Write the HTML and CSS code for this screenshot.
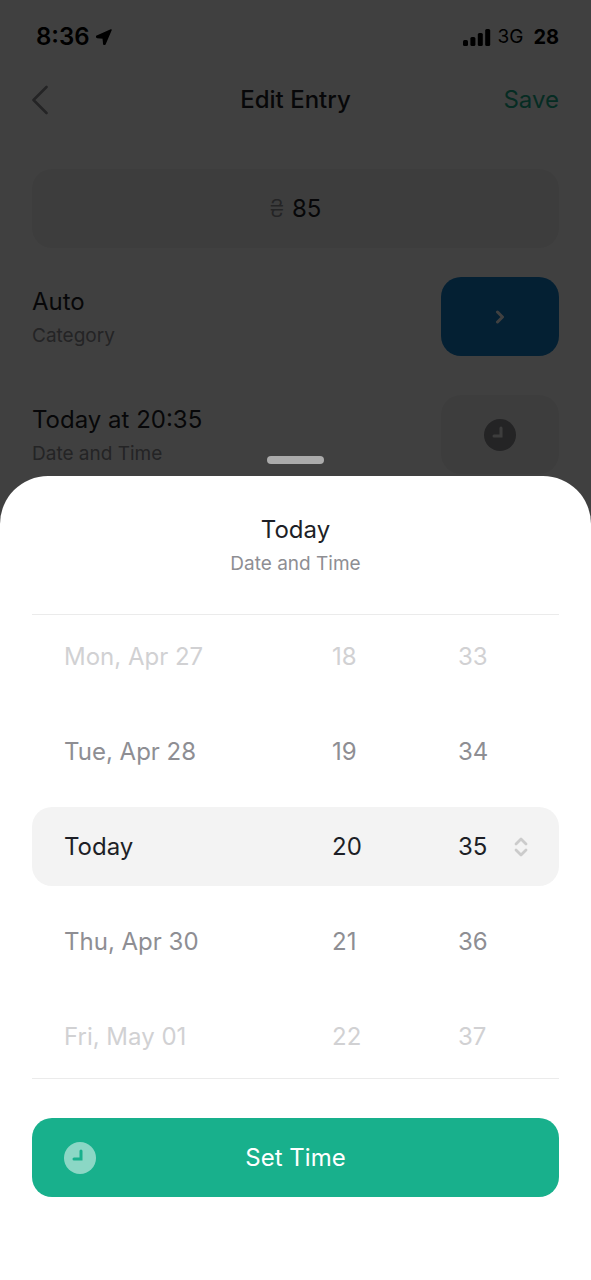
FILE: index.html
```html
<!DOCTYPE html>
<html lang="en">
<head>
<meta charset="utf-8">
<meta name="viewport" content="width=device-width, initial-scale=1">
<title>Edit Entry</title>
<link rel="stylesheet" href="styles.css">
</head>
<body>
<div class="app">
  <main class="screen">
    <div class="status">
      <div class="status-left">
        <span class="clock">8:36</span>
        <svg width="16" height="16" viewBox="0 0 16 16" aria-hidden="true"><path d="M15 1 1 7.200q-.9.7.2 1.200l6 .5.6 6q.5 1 1.200.1z" fill="currentColor" stroke="currentColor" stroke-width="1.500" stroke-linejoin="round"/></svg>
      </div>
      <div class="status-right">
        <svg width="28" height="17" viewBox="0 0 28 17" aria-hidden="true"><g fill="currentColor"><rect y="11" width="5" height="6" rx="1.5"/><rect x="7.4" y="8" width="5" height="9" rx="1.5"/><rect x="14.8" y="4" width="5" height="13" rx="1.5"/><rect x="22.2" width="5" height="17" rx="1.5"/></g></svg>
        <span class="network">3G</span>
        <span class="battery">28</span>
      </div>
    </div>
    <header class="nav">
      <button class="back" type="button" aria-label="Back">
        <svg width="16" height="30" viewBox="0 0 16 30" aria-hidden="true"><path d="M14.500 2 1.500 15l13 13" fill="none" stroke="currentColor" stroke-width="2.600" stroke-linecap="round" stroke-linejoin="round"/></svg>
      </button>
      <h1 class="title">Edit Entry</h1>
      <button class="save" type="button">Save</button>
    </header>
    <div class="amount"><span class="currency">₴</span><span>85</span></div>
    <div class="row">
      <div class="row-text">
        <div class="label">Auto</div>
        <div class="hint">Category</div>
      </div>
      <button class="tile tile-blue" type="button" aria-label="Choose category">
        <svg width="10" height="14" viewBox="0 0 10 14" aria-hidden="true"><path d="m2.500 2 5 5-5 5" fill="none" stroke="currentColor" stroke-width="3" stroke-linecap="round" stroke-linejoin="round"/></svg>
      </button>
    </div>
    <div class="row">
      <div class="row-text">
        <div class="label">Today at 20:35</div>
        <div class="hint">Date and Time</div>
      </div>
      <button class="tile" type="button" aria-label="Choose date and time">
        <svg width="32" height="32" viewBox="0 0 32 32" aria-hidden="true"><circle cx="16" cy="16" r="16" fill="currentColor"/><path class="hands" d="M17 9v8h-7" fill="none" stroke-width="3" stroke-linecap="round"/></svg>
      </button>
    </div>
  </main>
  <div class="scrim"></div>
  <section class="sheet" aria-label="Date and Time">
    <div class="grabber"></div>
    <div class="panel">
      <div class="heading">
        <h2 class="label">Today</h2>
        <div class="hint">Date and Time</div>
      </div>
      <div class="picker">
        <div class="option far"><span>Mon, Apr 27</span><span>18</span><span>33</span></div>
        <div class="option near"><span>Tue, Apr 28</span><span>19</span><span>34</span></div>
        <div class="option selected"><span>Today</span><span>20</span><span>35</span>
          <svg width="14" height="20" viewBox="0 0 14 20" aria-hidden="true"><path d="m2 7 5-5 5 5M2 13l5 5 5-5" fill="none" stroke="currentColor" stroke-width="2.800" stroke-linecap="round" stroke-linejoin="round"/></svg>
        </div>
        <div class="option near"><span>Thu, Apr 30</span><span>21</span><span>36</span></div>
        <div class="option far"><span>Fri, May 01</span><span>22</span><span>37</span></div>
      </div>
      <button class="submit" type="button">
        <svg width="32" height="32" viewBox="0 0 32 32" aria-hidden="true"><circle cx="16" cy="16" r="16" fill="#8bd7c5"/><path d="M17 9v8h-7" fill="none" stroke="#18b08c" stroke-width="3" stroke-linecap="round"/></svg>
        <span>Set Time</span>
      </button>
    </div>
  </section>
</div>
</body>
</html>
```
FILE: styles.css
```css
* {
  box-sizing: border-box;
}

body {
  margin: 0;
  background: #fff;
  color: #1d1f26;
  font: 400 24px/32px Inter, "Noto Sans", sans-serif;
}

button {
  padding: 0;
  border: 0;
  background: none;
  color: inherit;
  font: inherit;
}

svg {
  display: block;
}

.app {
  display: grid;
  min-height: 100vh;
}

.screen,
.scrim,
.sheet {
  grid-area: 1 / 1;
}

.scrim {
  z-index: 1;
  background: rgba(0, 0, 0, 0.75);
}

.screen {
  padding: 21px 32px;
}

.status {
  display: flex;
  justify-content: space-between;
  align-items: center;
  padding-left: 4px;
  color: #000;
}

.status-left,
.status-right {
  display: flex;
  align-items: center;
  gap: 6px;
}

.clock {
  font-weight: 600;
}

.network {
  font-size: 19px;
}

.battery {
  padding-left: 4px;
  font-size: 20px;
  font-weight: 700;
}

.nav {
  display: grid;
  grid-template-columns: 1fr auto 1fr;
  align-items: center;
  margin-top: 31px;
}

.back {
  justify-self: start;
  color: #8e8e93;
}

.title,
.label {
  margin: 0;
  font-size: 24px;
  font-weight: 400;
}

.title {
  font-weight: 450;
}

.save {
  justify-self: end;
  color: #18b08c;
}

.amount {
  display: flex;
  justify-content: center;
  align-items: center;
  gap: 8px;
  height: 79px;
  margin-top: 53px;
  border-radius: 20px;
  background: #f3f3f3;
}

.currency {
  color: #8e8e93;
  font-weight: 300;
}

.row {
  display: flex;
  justify-content: space-between;
  align-items: center;
  margin-top: 29px;
}

.row + .row {
  margin-top: 39px;
}

.row-text {
  padding-top: 4px;
}

.hint {
  margin-top: 2px;
  color: #8e8e93;
  font-size: 19px;
}

.tile {
  display: grid;
  place-items: center;
  width: 118px;
  height: 79px;
  border-radius: 20px;
  background: #f3f3f3;
  color: #8e8e93;
}

.tile-blue {
  background: #1080cc;
  color: #fff;
}

.hands {
  stroke: #f3f3f3;
}

.sheet {
  z-index: 2;
  align-self: end;
}

.grabber {
  width: 57px;
  height: 8px;
  margin: 0 auto 12px;
  border-radius: 4px;
  background: #ababab;
}

.panel {
  padding: 38px 32px 83px;
  border-radius: 48px 48px 0 0;
  background: #fff;
}

.heading {
  padding-bottom: 34px;
  border-bottom: 1px solid #ebebeb;
  text-align: center;
}

.picker {
  display: grid;
  gap: 16px;
  padding: 2px 0;
  border-bottom: 1px solid #ebebeb;
}

.option {
  display: grid;
  grid-template-columns: 268fr 126fr 56fr auto;
  align-items: center;
  height: 79px;
  padding: 0 31px 0 32px;
  border-radius: 20px;
}

.option:not(.selected) {
  padding-right: 45px;
}

.near {
  color: #8e8e93;
}

.far {
  color: #d1d1d3;
}

.selected {
  background: #f3f3f3;
}

.selected svg {
  color: #cbcbcb;
}

.submit {
  display: grid;
  grid-template-columns: 1fr auto 1fr;
  align-items: center;
  width: 100%;
  height: 79px;
  margin-top: 39px;
  padding: 0 32px;
  border-radius: 20px;
  background: #18b08c;
  color: #fff;
}
```
